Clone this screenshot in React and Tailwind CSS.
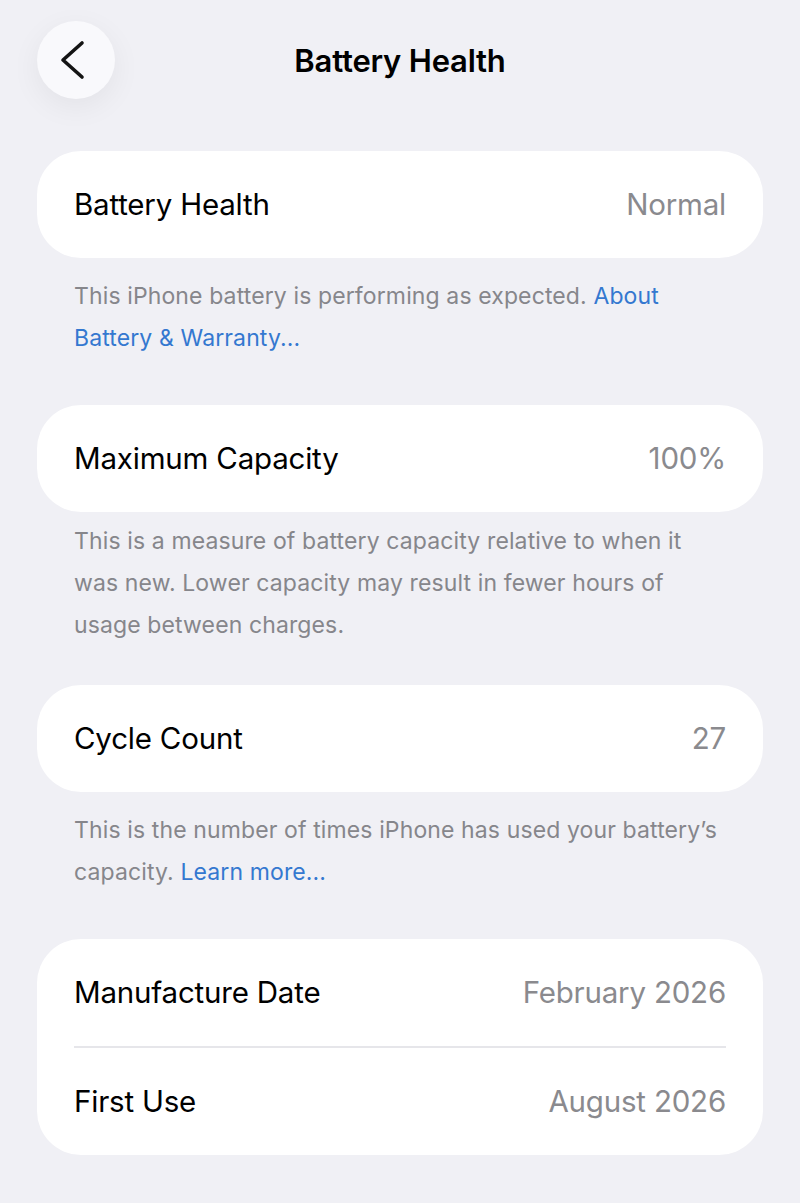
const font = { fontFamily: 'Inter, "Noto Sans", sans-serif' }

function Row({ label, value }) {
  return (
    <div className="flex h-[107px] items-center justify-between px-[37px]">
      <span className="text-[29.5px] tracking-[-0.2px] text-black">{label}</span>
      <span className="text-[29.5px] tracking-[-0.2px] text-[#8a8a8e]">{value}</span>
    </div>
  )
}

function Card({ children, className = '' }) {
  return <div className={`rounded-[44px] bg-white ${className}`}>{children}</div>
}

function Footer({ children, className = '' }) {
  return (
    <p className={`px-[37px] text-[23px] leading-[42px] tracking-[0.12px] text-[#86868b] ${className}`}>
      {children}
    </p>
  )
}

function Link({ children }) {
  return <span className="text-[#3478d0]">{children}</span>
}

export default function App() {
  return (
    <div className="min-h-[1203px] bg-[#f0f0f5] px-[37px] pb-10" style={font}>
      {/* nav bar */}
      <div className="grid grid-cols-[78px_1fr_78px] items-center pt-[21px]">
        <button className="flex h-[78px] w-[78px] items-center justify-center rounded-full bg-[#f9f9fc] shadow-[0_8px_30px_rgba(0,0,0,0.06)]">
          <svg width="78" height="78" viewBox="0 0 78 78" fill="none">
            <polyline
              points="45,22 26,39 45,56"
              stroke="#141414"
              strokeWidth="3.6"
              strokeLinecap="round"
              strokeLinejoin="round"
            />
          </svg>
        </button>
        <h1 className="pt-[3px] text-center text-[31px] font-semibold tracking-[-0.2px] text-black">
          Battery Health
        </h1>
        <div />
      </div>

      <Card className="mt-[52px]">
        <Row label="Battery Health" value="Normal" />
      </Card>
      <Footer className="mt-[17px]">
        This iPhone battery is performing as expected. <Link>About Battery &amp; Warranty...</Link>
      </Footer>

      <Card className="mt-[46px]">
        <Row label="Maximum Capacity" value="100%" />
      </Card>
      <Footer className="mt-[8px]">
        This is a measure of battery capacity relative to when it was new. Lower capacity may result in fewer hours of usage between charges.
      </Footer>

      <Card className="mt-[39px]">
        <Row label="Cycle Count" value="27" />
      </Card>
      <Footer className="mt-[17px]">
        This is the number of times iPhone has used your battery’s capacity. <Link>Learn more...</Link>
      </Footer>

      <Card className="mt-[46px]">
        <Row label="Manufacture Date" value="February 2026" />
        <div className="mx-[37px] h-[2px] bg-[#e6e6ea]" />
        <Row label="First Use" value="August 2026" />
      </Card>
    </div>
  )
}
